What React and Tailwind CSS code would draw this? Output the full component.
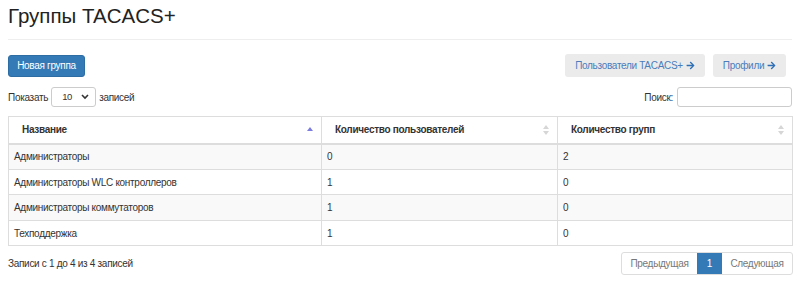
import React from 'react';
import { FaArrowRight } from 'react-icons/fa';

const rows = [
  { name: 'Администраторы', users: 0, groups: 2 },
  { name: 'Администраторы WLC контроллеров', users: 1, groups: 0 },
  { name: 'Администраторы коммутаторов', users: 1, groups: 0 },
  { name: 'Техподдержка', users: 1, groups: 0 },
];

const SortBoth = () => (
  <svg width="6" height="10" viewBox="0 0 6 10" className="shrink-0">
    <path d="M3 0 L6 4 L0 4 Z" fill="#d6d6d6" />
    <path d="M3 10 L6 6 L0 6 Z" fill="#d6d6d6" />
  </svg>
);

const SortAsc = () => (
  <svg width="6" height="10" viewBox="0 0 6 10" className="shrink-0">
    <path d="M3 2 L6 6 L0 6 Z" fill="#7b7be0" />
  </svg>
);

const App = () => {
  return (
    <div className="w-[800px] h-[284px] bg-white px-2 pt-[5px] text-[10px] tracking-[-0.3px] text-[#333] font-['Liberation_Sans',Arial,sans-serif] overflow-hidden">
      <h1 className="text-[20.5px] leading-[22px] tracking-normal text-[#222]">Группы TACACS+</h1>
      <div className="mt-[12px] h-px bg-[#eee]" />

      <div className="mt-[14px] flex items-center justify-between">
        <button className="w-[77px] h-[22px] rounded-[3px] bg-[#337ab7] border border-[#2e6da4] text-white text-[10px]">
          Новая группа
        </button>
        <div className="flex gap-2 mr-[6px]">
          <button className="w-[140px] h-[23px] rounded-[3px] bg-[#ebebeb] text-[#4a7dbb] text-[10px] flex items-center justify-center gap-[3px]">
            Пользователи TACACS+ <FaArrowRight size={9} className="text-[#2f6fb5]" />
          </button>
          <button className="w-[73px] h-[23px] rounded-[3px] bg-[#ebebeb] text-[#4a7dbb] text-[10px] flex items-center justify-center gap-[3px]">
            Профили <FaArrowRight size={9} className="text-[#2f6fb5]" />
          </button>
        </div>
      </div>

      <div className="mt-[10px] flex items-center justify-between">
        <div className="flex items-center gap-[3px]">
          <span>Показать</span>
          <div className="w-[45px] h-[20px] border border-[#ccc] rounded-[3px] flex items-center justify-between pl-[10px] pr-[6px] text-[9.5px]">
            <span>10</span>
            <svg width="8" height="6" viewBox="0 0 8 6">
              <path d="M1 1 L4 4 L7 1" stroke="#333" strokeWidth="1.6" fill="none" />
            </svg>
          </div>
          <span>записей</span>
        </div>
        <div className="flex items-center gap-[4px]">
          <span>Поиск:</span>
          <div className="w-[115px] h-[20px] border border-[#ccc] rounded-[3px]" />
        </div>
      </div>

      <table className="mt-[9px] w-[785px] border-collapse border border-[#ddd]">
        <thead>
          <tr className="h-[27px] border-b-2 border-[#ddd] font-bold text-left">
            <th className="w-[313px] pl-[13px] pr-[8px] border-r border-[#ddd]">
              <div className="flex items-center justify-between">Название <SortAsc /></div>
            </th>
            <th className="w-[236px] pl-[13px] pr-[8px] border-r border-[#ddd]">
              <div className="flex items-center justify-between">Количество пользователей <SortBoth /></div>
            </th>
            <th className="pl-[13px] pr-[8px]">
              <div className="flex items-center justify-between">Количество групп <SortBoth /></div>
            </th>
          </tr>
        </thead>
        <tbody>
          {rows.map((r, i) => (
            <tr key={i} className={`border-t border-[#ddd] ${i % 2 === 0 ? 'h-[26px] bg-[#f9f9f9]' : 'h-[25px] bg-white'}`}>
              <td className="px-[5px] border-r border-[#ddd]">{r.name}</td>
              <td className="px-[5px] border-r border-[#ddd]">{r.users}</td>
              <td className="px-[5px]">{r.groups}</td>
            </tr>
          ))}
        </tbody>
      </table>

      <div className="mt-[6px] flex items-center justify-between">
        <span>Записи с 1 до 4 из 4 записей</span>
        <div className="flex h-[23px] border border-[#ddd] rounded-[3px] text-[#777] mr-[-1px]">
          <span className="w-[75px] flex items-center justify-center">Предыдущая</span>
          <span className="w-[25px] flex items-center justify-center bg-[#337ab7] text-white">1</span>
          <span className="w-[70px] flex items-center justify-center">Следующая</span>
        </div>
      </div>
    </div>
  );
};

export default App;
